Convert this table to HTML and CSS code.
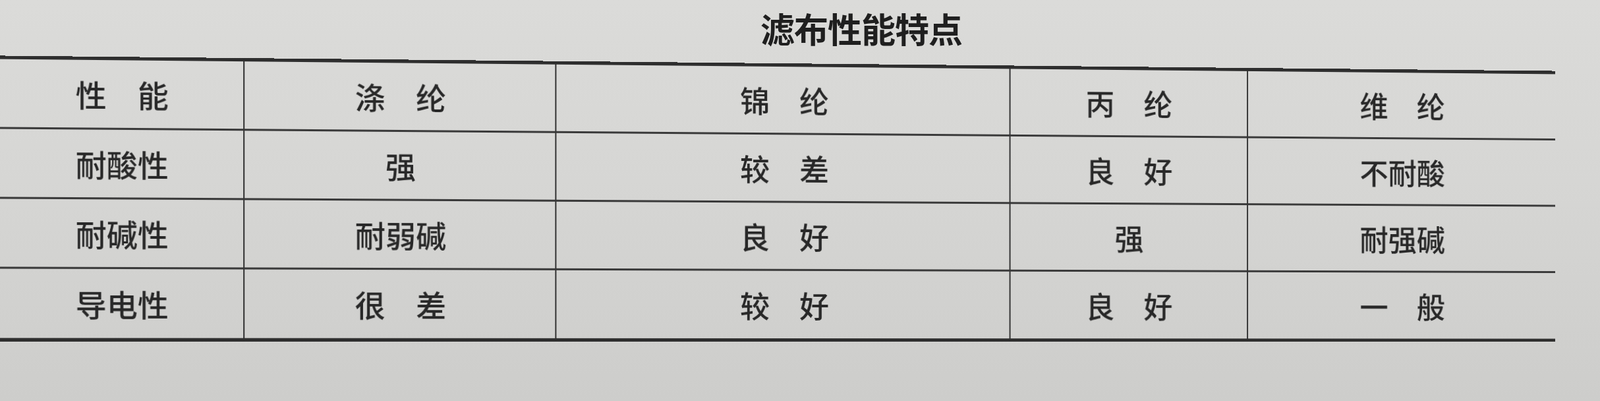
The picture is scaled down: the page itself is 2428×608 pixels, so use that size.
FILE: index.html
```html
<!DOCTYPE html>
<html lang="zh-CN">
<head>
<meta charset="utf-8">
<title>滤布性能特点</title>
<link rel="stylesheet" href="styles.css">
</head>
<body>
<div class="page">
  <h1 class="title">滤布性能特点</h1>
  <div class="table">
    <div class="cell c0">性　能</div>
    <div class="cell">涤　纶</div>
    <div class="cell">锦　纶</div>
    <div class="cell">丙　纶</div>
    <div class="cell">维　纶</div>

    <div class="cell c0">耐酸性</div>
    <div class="cell">强</div>
    <div class="cell">较　差</div>
    <div class="cell">良　好</div>
    <div class="cell">不耐酸</div>

    <div class="cell c0">耐碱性</div>
    <div class="cell">耐弱碱</div>
    <div class="cell">良　好</div>
    <div class="cell">强</div>
    <div class="cell">耐强碱</div>

    <div class="cell c0 last">导电性</div>
    <div class="cell last">很　差</div>
    <div class="cell last">较　好</div>
    <div class="cell last">良　好</div>
    <div class="cell last">一　般</div>
  </div>
</div>
</body>
</html>
```

FILE: styles.css
```css
html, body {
  margin: 0;
  padding: 0;
}

body {
  width: 2428px;
  height: 608px;
  overflow: hidden;
  background: linear-gradient(180deg, #dbdbd9 0%, #d6d6d4 45%, #cdcdcb 100%);
  font-family: "Noto Sans CJK SC", "Noto Sans", sans-serif;
  color: #282828;
}

.page {
  display: flex;
  flex-direction: column;
}

.title {
  margin: 0;
  height: 86px;
  line-height: 86px;
  font-size: 52px;
  font-weight: 700;
  color: #1f1f1f;
  padding-left: 1154px;
  letter-spacing: -1px;
}

/* the printed table is photographed at a slight angle:
   a perspective mapping keeps the bottom rule flat and tilts the top rule */
.table {
  margin-top: 10px;
  width: 2360px;
  display: grid;
  grid-template-columns: 353px 461px 689px 369px 488px;
  border-top: 5px solid #2e2e2e;
  border-bottom: 5px solid #2e2e2e;
  transform-origin: 0 0;
  transform: matrix3d(1.054187, 0.0100672, 0, 0.000022961,
                      0, 1.028846, 0, 0,
                      0, 0, 1, 0,
                      0, -11.5721, 0, 1);
}

.cell {
  height: 100px;
  display: flex;
  align-items: center;
  justify-content: center;
  font-size: 45px;
  font-weight: 500;
  line-height: 1;
  border-bottom: 3px solid #3a3a3a;
  border-left: 2px solid #333333;
  white-space: nowrap;
}

.cell.c0 {
  border-left: none;
}

.cell.last {
  border-bottom: none;
  height: 102px;
}
```
